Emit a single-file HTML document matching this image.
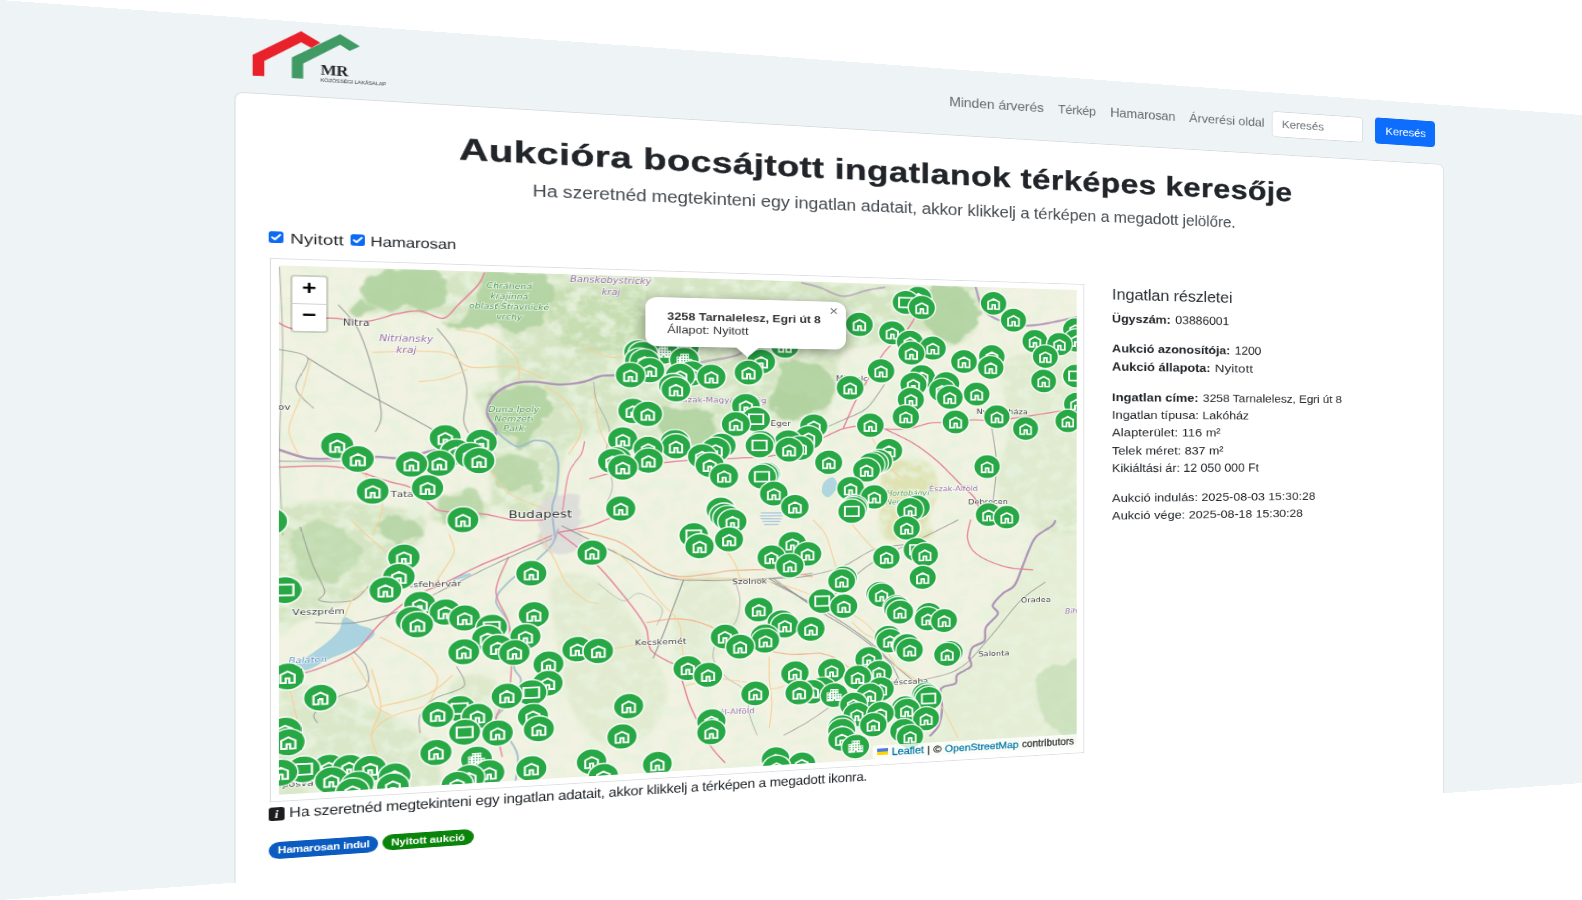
<!DOCTYPE html>
<html lang="hu"><head><meta charset="utf-8"><title>Aukcióra bocsájtott ingatlanok térképes keresője</title>
<style>
html,body{margin:0;padding:0;background:#fff;width:1582px;height:900px;overflow:hidden}
body{font-family:"Liberation Sans",sans-serif;font-kerning:none}
#w{position:absolute;left:0;top:0;width:1714px;height:964px;background:#eef3f6;overflow:hidden;transform-origin:0 0;transform:matrix3d(1.24354558,0.0903968027,0,0.000202628582,0,0.933609959,0,-1.77039391e-19,0,0,1,0,0,0,0,1)}
.t{position:absolute;white-space:nowrap;font-kerning:none;margin:0;padding:0;display:block;text-decoration:none}
#card{position:absolute;left:197.4px;top:84.4px;width:1319.7px;height:1000px;background:#fff;border-radius:7px;box-shadow:0 0 0 1px rgba(0,0,0,.09)}
#thumb{position:absolute;left:226.5px;top:267px;width:832.4px;height:609.5px;background:#fff;box-shadow:inset 0 0 0 1px #dcdfe3}
#map{position:absolute;left:234.8px;top:275.0px;width:815.6px;height:593.5px;overflow:hidden;background:#edf0d8}
.cb{position:absolute;width:13px;height:13px;border-radius:2.5px;background:#0b6bf2}
#inp{position:absolute;left:1290.3px;top:24.5px;width:119.2px;height:35.5px;background:#fff;border-radius:5px;box-shadow:inset 0 0 0 1px #d3d9df}
#btn{position:absolute;left:1425px;top:24px;width:81px;height:36px;background:#0d6efd;border-radius:4.5px}
.badge{position:absolute;height:18.8px;border-radius:10px}
</style></head><body><div id="w">

<svg style="position:absolute;left:0;top:0" width="400" height="84" viewBox="0 0 400 84">
<polygon fill="#e8212b" points="211.9,64.0 211.9,40.8 254.7,10.4 271.8,22.0 263.7,28.4 254.7,22.9 222.1,46.7 222.1,63.7"/>
<polygon fill="#3f9a64" points="246.4,64.0 246.4,40.7 289.6,10.7 307.4,22.9 298.2,28.9 289.6,22.7 256.5,46.7 256.5,63.8"/>
</svg>
<div class="t" style="left:272.3px;top:45.3px;font:700 16px/1 'Liberation Serif',serif;color:#2a2a2e;letter-spacing:-0.424px;transform:scaleX(0.9530);transform-origin:0 0;">MR</div>
<div class="t" style="left:272.0px;top:61.5px;font:400 5.6px/1 'Liberation Sans',sans-serif;color:#3a3a40;letter-spacing:-0.108px;transform:scaleX(0.9157);transform-origin:0 0;">KÖZÖSSÉGI LAKÁSALAP</div>
<a class="t" href="#" style="left:902.7px;top:33.8px;font:400 16px/1 'Liberation Sans',sans-serif;color:#666b70;letter-spacing:-0.038px;transform:scaleX(0.9865);transform-origin:0 0;">Minden árverés</a>
<a class="t" href="#" style="left:1028.0px;top:33.8px;font:400 16px/1 'Liberation Sans',sans-serif;color:#666b70;letter-spacing:-0.249px;transform:scaleX(0.9268);transform-origin:0 0;">Térkép</a>
<a class="t" href="#" style="left:1090.3px;top:33.8px;font:400 16px/1 'Liberation Sans',sans-serif;color:#666b70;letter-spacing:-0.111px;transform:scaleX(0.9681);transform-origin:0 0;">Hamarosan</a>
<a class="t" href="#" style="left:1186.4px;top:33.8px;font:400 16px/1 'Liberation Sans',sans-serif;color:#666b70;letter-spacing:-0.043px;transform:scaleX(0.9827);transform-origin:0 0;">Árverési oldal</a>
<div id="inp"></div><div id="btn"></div>
<div class="t" style="left:1302.5px;top:34.4px;font:400 15.5px/1 'Liberation Sans',sans-serif;color:#666c72;letter-spacing:-0.100px;transform:scaleX(0.9687);transform-origin:0 0;">Keresés</div>
<div class="t" style="left:1438.5px;top:34.2px;font:400 15.5px/1 'Liberation Sans',sans-serif;color:#fff;letter-spacing:-0.100px;transform:scaleX(0.9687);transform-origin:0 0;">Keresés</div>
<div id="card"></div>
<h1 class="t" style="left:398.9px;top:117.3px;font:700 35.5px/1 'Liberation Sans',sans-serif;color:#212529;letter-spacing:0.452px;transform:scaleX(1.0790);transform-origin:0 0;-webkit-text-stroke:0.45px #212529;">Aukcióra bocsájtott ingatlanok térképes keresője</h1>
<p class="t" style="left:469.4px;top:168.5px;font:400 19.5px/1 'Liberation Sans',sans-serif;color:#454a4f;letter-spacing:-0.074px;transform:scaleX(0.9745);transform-origin:0 0;">Ha szeretnéd megtekinteni egy ingatlan adatait, akkor klikkelj a térképen a megadott jelölőre.</p>
<div class="cb" style="left:226.3px;top:237.4px"><svg width="13" height="13" viewBox="0 0 13 13" style="position:absolute;left:0;top:0"><path d="M3 6.7 L5.4 9 L10 3.8" fill="none" stroke="#fff" stroke-width="1.9" stroke-linecap="round" stroke-linejoin="round"/></svg></div>
<div class="cb" style="left:298.7px;top:237.4px"><svg width="13" height="13" viewBox="0 0 13 13" style="position:absolute;left:0;top:0"><path d="M3 6.7 L5.4 9 L10 3.8" fill="none" stroke="#fff" stroke-width="1.9" stroke-linecap="round" stroke-linejoin="round"/></svg></div>
<label class="t" style="left:245.3px;top:236.5px;font:400 16px/1 'Liberation Sans',sans-serif;color:#212529;letter-spacing:0.100px;transform:scaleX(1.0404);transform-origin:0 0;">Nyitott</label>
<label class="t" style="left:317.2px;top:236.5px;font:400 16px/1 'Liberation Sans',sans-serif;color:#212529;letter-spacing:-0.108px;transform:scaleX(0.9690);transform-origin:0 0;">Hamarosan</label>
<div id="thumb"></div>
<div id="map">
<svg width="815.6" height="593.5" viewBox="0 0 815.6 593.5" style="position:absolute;left:0;top:0" font-family="Liberation Sans,sans-serif">
<defs><filter id="nz" x="0" y="0" width="100%" height="100%"><feTurbulence type="fractalNoise" baseFrequency="0.06 0.07" numOctaves="3" seed="7" result="n"/><feColorMatrix in="n" type="matrix" values="0 0 0 0 0.80  0 0 0 0 0.885  0 0 0 0 0.72  0 3.2 0 0 -1.35"/></filter><filter id="bl2" x="-5%" y="-5%" width="110%" height="110%"><feGaussianBlur stdDeviation="0.6"/></filter><filter id="bl3" x="-5%" y="-5%" width="110%" height="110%"><feTurbulence type="fractalNoise" baseFrequency="0.045" numOctaves="3" seed="3" result="t"/><feDisplacementMap in="SourceGraphic" in2="t" scale="22" xChannelSelector="R" yChannelSelector="G"/><feGaussianBlur stdDeviation="0.8"/></filter><filter id="bl" x="-5%" y="-5%" width="110%" height="110%"><feGaussianBlur stdDeviation="2.2"/></filter>
<g id="mc"><circle r="15.6" fill="#000" fill-opacity=".10"/><circle r="15.25" fill="#28a745" stroke="#ffffff" stroke-opacity=".9" stroke-width="1.6"/></g>
<g id="mh"><use href="#mc"/><path d="M-6.25,7.3 V-2 L0,-5.6 L6.25,-2 V7.3 H1.6 V1.9 H-1.6 V7.3 Z" fill="none" stroke="#fff" stroke-width="2" stroke-linejoin="miter"/></g>
<g id="mr"><use href="#mc"/><rect x="-7.5" y="-6" width="15" height="12" fill="none" stroke="#fff" stroke-width="2"/></g>
<g id="mb"><use href="#mc"/><path d="M-8,7.5 V-3.8 H-4.2 V-7.5 H4.6 V-1.2 H8 V7.5 Z" fill="#fff"/><g fill="#28a745"><rect x="-3.30" y="-6.10" width="1.4" height="1.4"/><rect x="-0.45" y="-6.10" width="1.4" height="1.4"/><rect x="2.40" y="-6.10" width="1.4" height="1.4"/><rect x="-6.90" y="-2.60" width="1.4" height="1.4"/><rect x="-6.90" y="0.30" width="1.4" height="1.4"/><rect x="-6.90" y="3.20" width="1.4" height="1.4"/><rect x="-3.30" y="-2.60" width="1.4" height="1.4"/><rect x="-3.30" y="0.30" width="1.4" height="1.4"/><rect x="-3.30" y="3.20" width="1.4" height="1.4"/><rect x="-0.45" y="-2.60" width="1.4" height="1.4"/><rect x="-0.45" y="0.30" width="1.4" height="1.4"/><rect x="2.40" y="-2.60" width="1.4" height="1.4"/><rect x="2.40" y="0.30" width="1.4" height="1.4"/><rect x="2.40" y="3.20" width="1.4" height="1.4"/><rect x="5.40" y="0.30" width="1.4" height="1.4"/><rect x="5.40" y="3.20" width="1.4" height="1.4"/><rect x="-0.45" y="5" width="1.4" height="2.5"/></g></g>
</defs>
<rect width="100%" height="100%" fill="#f1f2e1"/>
<g filter="url(#bl)">
<path d="M149.1,0.9 C199.8,0.8 350.5,-12.4 390.7,2.4 C431.0,17.2 398.2,74.8 390.7,89.5 C383.3,104.2 356.9,89.6 346.0,90.4 C335.1,91.2 330.3,89.0 325.4,94.3 C320.4,99.7 323.4,117.2 316.6,122.6 C309.8,127.9 296.6,126.4 284.5,126.5 C272.5,126.7 254.3,122.9 244.3,123.6 C234.3,124.3 231.1,129.6 224.4,130.8 C217.8,132.1 208.9,137.3 204.7,131.1 C200.5,124.8 199.1,103.7 199.1,93.4 C199.1,83.1 206.6,74.3 204.7,69.2 C202.8,64.1 196.3,63.2 187.9,62.8 C179.6,62.4 161.8,69.2 154.6,67.1 C147.5,65.0 157.7,52.8 145.0,50.3 C132.3,47.9 92.3,52.4 78.5,52.2 C64.8,52.1 62.5,53.8 62.5,49.4 C62.5,44.9 74.5,33.1 78.5,25.4 C82.5,17.7 74.8,7.4 86.6,3.3 C98.3,-0.8 98.4,1.1 149.1,0.9Z" fill="#d5e5c3" fill-opacity="1"/>
<path d="M363.2,1.6 C394.5,-31.4 512.2,1.4 551.0,1.4 C589.8,1.3 581.4,1.0 595.9,1.3 C610.4,1.5 621.2,2.9 638.2,2.8 C655.2,2.7 687.4,-4.6 697.9,0.7 C708.4,6.0 702.4,23.7 701.3,34.4 C700.1,45.0 697.9,57.6 691.2,64.6 C684.6,71.7 670.1,77.6 661.3,76.5 C652.5,75.5 649.1,58.8 638.2,58.5 C627.3,58.1 610.4,69.6 595.9,74.3 C581.4,78.9 559.5,77.5 551.0,86.2 C542.4,94.9 547.8,113.7 544.6,126.5 C541.5,139.4 538.3,155.2 532.0,163.2 C525.6,171.1 515.6,173.0 506.8,174.2 C497.9,175.5 490.1,168.9 478.7,170.8 C467.4,172.6 452.4,180.5 438.7,185.3 C424.9,190.2 408.7,197.3 396.1,199.7 C383.6,202.1 368.7,232.7 363.2,199.7 C357.7,166.7 331.9,34.7 363.2,1.6Z" fill="#d5e5c3" fill-opacity="1"/>
<path d="M187.9,131.3 C209.3,124.1 293.6,118.2 316.6,122.6 C339.5,127.0 327.8,147.0 325.4,157.6 C322.9,168.1 310.7,178.7 302.0,185.8 C293.2,192.8 279.7,192.8 273.0,199.8 C266.2,206.7 264.8,214.8 261.5,227.5 C258.1,240.3 259.5,266.9 252.9,276.0 C246.3,285.2 232.5,283.8 221.6,282.5 C210.8,281.2 196.3,273.0 187.9,268.3 C179.5,263.6 177.7,255.1 171.2,254.5 C164.7,253.8 154.6,258.8 149.1,264.4 C143.6,270.0 131.7,284.0 138.1,288.1 C144.6,292.1 178.7,296.7 187.9,288.9 C197.1,281.0 193.5,254.7 193.5,241.0 C193.5,227.3 187.9,215.8 187.9,206.7 C187.9,197.5 193.5,192.9 193.5,186.1 C193.5,179.2 188.8,174.7 187.9,165.6 C187.0,156.4 166.5,138.5 187.9,131.3Z" fill="#d5e5c3" fill-opacity="1"/>
<path d="M284.5,130.0 C297.2,121.7 360.4,112.4 378.1,121.7 C395.8,130.9 393.6,168.9 390.7,185.5 C387.8,202.0 373.2,218.6 360.8,220.9 C348.5,223.3 326.4,207.9 316.6,199.7 C306.7,191.5 307.3,183.4 302.0,171.8 C296.6,160.1 271.8,138.4 284.5,130.0Z" fill="#d5e5c3" fill-opacity="0.8"/>
<path d="M-0.6,275.3 C19.5,254.0 98.6,271.3 120.1,277.0 C141.7,282.6 130.2,300.4 128.8,309.3 C127.3,318.2 117.7,321.6 111.5,330.3 C105.3,339.1 101.0,353.2 91.5,361.8 C82.1,370.4 67.4,375.2 54.8,381.9 C42.2,388.5 25.1,397.8 15.9,401.5 C6.6,405.3 2.1,425.4 -0.6,404.4 C-3.4,383.3 -20.8,296.5 -0.6,275.3Z" fill="#d5e5c3" fill-opacity="1"/>
<path d="M-0.6,481.2 C4.9,460.5 18.6,472.8 32.5,475.9 C46.4,479.0 66.0,489.4 83.0,499.8 C100.0,510.3 124.0,526.0 134.5,538.6 C145.0,551.1 146.1,563.2 146.1,575.2 C146.1,587.1 159.0,606.1 134.5,610.2 C110.1,614.3 21.9,621.3 -0.6,599.8 C-23.2,578.3 -6.2,501.8 -0.6,481.2Z" fill="#d5e5c3" fill-opacity="0.8"/>
<path d="M157.7,475.3 C163.6,467.2 185.1,464.6 193.0,469.9 C200.8,475.1 205.8,494.7 204.8,506.7 C203.8,518.7 194.9,539.9 187.1,541.9 C179.2,543.8 162.6,529.6 157.7,518.5 C152.9,507.4 151.9,483.4 157.7,475.3Z" fill="#d5e5c3" fill-opacity="0.7"/>
<path d="M252.7,363.0 C257.8,348.5 278.0,352.7 289.2,356.7 C300.4,360.8 309.6,372.0 319.9,387.2 C330.3,402.4 343.3,429.0 351.1,447.9 C358.9,466.9 367.8,483.6 366.8,500.9 C365.7,518.3 355.7,542.6 344.8,551.9 C333.9,561.1 313.8,563.4 301.4,556.5 C289.1,549.6 278.0,529.2 270.9,510.5 C263.8,491.7 261.8,468.4 258.7,443.8 C255.7,419.2 247.6,377.5 252.7,363.0Z" fill="#d5e5c3" fill-opacity="0.55"/>
<path d="M378.1,366.7 C384.5,349.4 405.7,353.7 416.3,360.3 C427.0,366.9 440.5,391.3 442.1,406.5 C443.7,421.6 436.6,441.6 426.0,451.2 C415.3,460.8 386.1,478.2 378.1,464.1 C370.2,450.0 371.8,384.0 378.1,366.7Z" fill="#d5e5c3" fill-opacity="0.5"/>
<path d="M716.9,400.6 C720.5,393.4 731.2,397.1 738.3,385.3 C745.5,373.6 753.3,344.5 759.9,330.0 C766.5,315.4 767.7,303.4 778.0,298.2 C788.4,293.0 814.6,247.6 821.9,298.9 C829.3,350.3 851.8,557.1 821.9,606.3 C792.1,655.6 670.6,605.3 643.1,594.3 C615.6,583.3 655.3,554.5 657.0,540.2 C658.7,525.9 651.2,514.9 653.5,508.5 C655.9,502.1 666.9,505.9 671.0,501.5 C675.1,497.2 673.9,486.6 678.0,482.2 C682.1,477.8 692.1,479.5 695.6,475.1 C699.1,470.6 695.6,463.2 699.2,455.4 C702.7,447.7 713.9,437.5 716.9,428.4 C719.9,419.2 713.3,407.7 716.9,400.6Z" fill="#d5e5c3" fill-opacity="0.4"/>
<path d="M728.2,101.5 C732.7,84.4 747.5,85.4 762.2,81.9 C777.0,78.5 805.3,44.6 816.8,80.8 C828.3,117.0 843.4,263.0 831.5,299.2 C819.5,335.4 763.5,306.9 745.2,297.8 C726.8,288.7 723.1,263.6 721.4,244.7 C719.7,225.8 733.8,208.3 735.0,184.4 C736.1,160.5 723.7,118.6 728.2,101.5Z" fill="#d5e5c3" fill-opacity="0.6"/>
<path d="M252.9,23.0 C264.5,11.6 315.2,13.3 331.2,13.3 C347.2,13.4 346.5,12.2 348.9,23.3 C351.4,34.4 353.8,68.5 346.0,79.8 C338.2,91.2 316.0,91.0 302.0,91.3 C287.9,91.6 269.7,93.1 261.5,81.7 C253.3,70.3 241.3,34.4 252.9,23.0Z" fill="#c3dbae" fill-opacity="0.8"/>
<path d="M595.9,229.1 C601.3,221.1 616.4,218.0 625.1,218.1 C633.8,218.1 643.2,222.5 648.1,229.3 C653.0,236.1 655.2,248.0 654.7,259.1 C654.1,270.3 645.9,286.3 644.8,296.2 C643.7,306.1 656.3,315.0 648.1,318.6 C639.9,322.1 605.1,326.3 595.9,317.5 C586.7,308.8 592.7,280.6 592.7,265.9 C592.7,251.1 590.5,237.0 595.9,229.1Z" fill="#dfe3b4" fill-opacity="1"/>
</g>
<rect width="100%" height="100%" filter="url(#nz)" opacity=".85"/>
<g filter="url(#bl3)">
<path d="M770.8,498.6 C774.4,488.8 787.7,488.7 796.3,487.8 C804.8,486.9 817.7,477.4 821.9,493.1 C826.2,508.8 826.8,568.2 821.9,582.1 C817.1,595.9 800.5,582.0 792.6,576.2 C784.7,570.3 778.0,559.9 774.4,547.0 C770.8,534.0 767.1,508.5 770.8,498.6Z" fill="#b1d3a1" fill-opacity="0.45"/>
<path d="M86.6,5.0 C96.5,0.7 127.7,-2.2 138.1,-0.4 C148.5,1.5 147.3,8.9 149.1,16.2 C150.9,23.5 151.8,37.7 149.1,43.4 C146.4,49.2 138.6,51.1 132.6,50.7 C126.7,50.3 119.0,41.5 113.6,41.1 C108.1,40.7 104.5,48.1 100.0,48.3 C95.5,48.4 90.2,45.7 86.6,41.9 C83.0,38.1 78.5,31.6 78.5,25.4 C78.5,19.2 76.6,9.3 86.6,5.0Z" fill="#b1d3a1" fill-opacity="0.90"/>
<path d="M63.8,46.0 C66.5,43.9 77.4,40.2 81.2,40.4 C85.0,40.6 87.0,45.0 86.6,47.0 C86.1,48.9 82.1,51.3 78.5,52.2 C74.9,53.2 67.6,53.7 65.2,52.6 C62.7,51.6 61.2,48.0 63.8,46.0Z" fill="#b1d3a1" fill-opacity="0.90"/>
<path d="M151.9,60.3 C154.2,57.4 165.2,57.7 171.2,49.6 C177.2,41.4 184.2,19.5 187.9,11.4 C191.6,3.3 184.1,2.7 193.5,0.9 C202.9,-0.8 234.4,-2.3 244.3,0.8 C254.2,3.9 252.9,11.7 252.9,19.5 C252.9,27.3 248.1,39.3 244.3,47.5 C240.5,55.7 235.8,65.6 230.1,68.6 C224.4,71.6 215.5,67.8 210.3,65.7 C205.2,63.5 202.8,56.1 199.1,55.6 C195.4,55.2 192.6,61.0 187.9,62.8 C183.3,64.6 176.3,66.0 171.2,66.7 C166.1,67.4 160.6,68.1 157.4,67.0 C154.1,66.0 149.6,63.2 151.9,60.3Z" fill="#b1d3a1" fill-opacity="0.90"/>
<path d="M199.1,141.5 C202.8,138.0 209.4,132.2 216.0,130.9 C222.6,129.7 233.0,130.7 238.6,134.1 C244.3,137.5 249.1,144.4 250.0,151.3 C251.0,158.2 247.2,169.8 244.3,175.6 C241.5,181.3 235.8,181.4 233.0,186.0 C230.1,190.6 230.1,200.9 227.3,203.2 C224.5,205.5 219.7,202.7 216.0,199.8 C212.2,196.9 208.5,190.6 204.7,186.1 C201.0,181.5 195.4,178.1 193.5,172.4 C191.6,166.7 192.6,157.0 193.5,151.8 C194.4,146.7 195.4,144.9 199.1,141.5Z" fill="#b1d3a1" fill-opacity="0.90"/>
<path d="M193.5,217.0 C197.2,213.0 208.9,209.5 216.0,210.1 C223.0,210.7 231.1,215.3 235.8,220.5 C240.5,225.7 245.3,235.6 244.3,241.3 C243.4,247.1 236.7,253.4 230.1,255.0 C223.5,256.7 210.8,254.8 204.7,251.3 C198.6,247.9 195.4,239.8 193.5,234.1 C191.6,228.4 189.8,220.9 193.5,217.0Z" fill="#b1d3a1" fill-opacity="0.72"/>
<path d="M149.1,264.4 C152.8,258.8 164.7,253.8 171.2,254.5 C177.7,255.1 185.6,262.6 187.9,268.3 C190.2,274.0 191.6,285.5 185.1,288.8 C178.7,292.1 155.1,292.3 149.1,288.2 C143.1,284.2 145.4,270.1 149.1,264.4Z" fill="#b1d3a1" fill-opacity="0.72"/>
<path d="M478.7,113.0 C482.9,106.3 492.7,103.1 500.5,101.8 C508.3,100.4 518.8,101.4 525.6,105.0 C532.5,108.5 540.4,114.4 541.5,122.9 C542.5,131.4 537.2,147.9 532.0,155.9 C526.7,163.8 517.2,169.3 509.9,170.6 C502.6,171.8 493.7,168.3 488.0,163.5 C482.3,158.7 477.2,150.3 475.6,141.9 C474.1,133.5 474.6,119.7 478.7,113.0Z" fill="#b1d3a1" fill-opacity="0.90"/>
<path d="M644.8,6.3 C652.0,1.7 672.4,-2.2 681.2,1.3 C690.1,4.7 696.2,17.7 697.9,27.0 C699.6,36.3 697.3,49.5 691.2,57.1 C685.1,64.8 669.0,73.2 661.3,72.8 C653.6,72.4 648.7,61.9 644.8,54.6 C641.0,47.2 638.2,36.8 638.2,28.8 C638.2,20.7 637.6,10.8 644.8,6.3Z" fill="#b1d3a1" fill-opacity="0.90"/>
<path d="M363.1,162.5 C366.8,158.1 376.5,158.4 383.6,158.3 C390.8,158.3 400.6,158.5 406.1,162.2 C411.5,165.9 416.2,174.5 416.5,180.6 C416.8,186.7 412.4,195.2 407.8,199.0 C403.2,202.8 395.1,202.7 388.8,203.1 C382.5,203.4 374.5,204.1 369.9,201.1 C365.3,198.0 362.5,191.3 361.4,184.8 C360.2,178.4 359.4,167.0 363.1,162.5Z" fill="#b1d3a1" fill-opacity="0.90"/>
<path d="M476.2,139.0 C482.9,136.5 510.8,135.1 517.7,138.5 C524.7,141.9 521.7,155.5 517.7,159.3 C513.8,163.2 500.7,162.6 494.0,161.6 C487.4,160.6 481.0,157.2 478.0,153.4 C475.0,149.7 469.6,141.5 476.2,139.0Z" fill="#b1d3a1" fill-opacity="0.90"/>
<path d="M91.5,287.2 C93.9,283.1 114.4,284.6 120.1,287.7 C125.8,290.7 128.3,301.5 125.9,305.6 C123.5,309.8 111.5,315.4 105.8,312.4 C100.1,309.3 89.1,291.3 91.5,287.2Z" fill="#b1d3a1" fill-opacity="0.81"/>
<path d="M15.9,300.0 C22.4,290.8 45.5,288.8 54.8,293.7 C64.1,298.6 72.6,318.8 71.7,329.4 C70.8,339.9 58.5,353.7 49.2,357.0 C39.9,360.3 21.4,358.5 15.9,349.0 C10.3,339.5 9.4,309.2 15.9,300.0Z" fill="#b1d3a1" fill-opacity="0.54"/>
<path d="M244.3,269.0 C248.1,263.3 256.2,255.8 261.5,255.3 C266.7,254.8 272.0,260.1 275.9,265.9 C279.7,271.8 285.0,282.9 284.5,290.4 C284.1,298.0 278.7,307.7 273.0,311.1 C267.2,314.5 255.8,314.2 250.0,310.7 C244.3,307.1 239.6,296.6 238.6,289.7 C237.7,282.7 240.5,274.7 244.3,269.0Z" fill="#dcdbd9" fill-opacity="0.90"/>
<path d="M240.6,289.6 C247.2,285.4 269.9,286.4 277.0,290.2 C284.0,294.0 286.1,305.7 283.1,312.4 C280.0,319.0 266.3,329.7 258.7,330.2 C251.2,330.7 240.6,321.9 237.6,315.1 C234.6,308.3 234.1,293.8 240.6,289.6Z" fill="#dcdbd9" fill-opacity="0.90"/>
</g>
<g filter="url(#bl2)">
<path d="M58.3,397.1 C61.2,396.2 67.2,403.4 71.5,405.9 C75.9,408.5 82.5,410.0 84.4,412.6 C86.4,415.2 86.4,417.9 83.1,421.4 C79.8,425.0 71.6,430.1 64.9,434.0 C58.2,437.9 49.5,441.2 42.9,444.7 C36.3,448.1 30.6,453.7 25.4,454.9 C20.1,456.0 11.3,453.9 11.3,451.4 C11.3,449.0 20.1,444.4 25.4,440.0 C30.6,435.5 38.1,429.5 42.9,424.7 C47.6,420.0 51.3,416.0 53.9,411.3 C56.4,406.7 55.3,398.0 58.3,397.1Z" fill="#aad3df" fill-opacity="1"/>
<path d="M530.4,247.7 C532.3,244.6 537.5,240.8 539.9,241.6 C542.2,242.4 545.3,248.5 544.6,252.6 C543.9,256.7 538.5,264.7 535.8,266.0 C533.0,267.3 529.1,263.1 528.2,260.1 C527.3,257.0 528.4,250.8 530.4,247.7Z" fill="#aad3df" fill-opacity="0.9"/>
<path d="M159.0,354.8 C161.1,353.5 170.8,350.5 173.3,350.3 C175.8,350.0 176.2,352.0 174.1,353.2 C172.0,354.5 163.1,357.5 160.6,357.7 C158.1,358.0 156.9,356.0 159.0,354.8Z" fill="#aad3df" fill-opacity="1"/>
</g>
<path d="M-0.6,206.5 C3.7,208.2 16.7,214.8 25.5,216.5 C34.2,218.2 41.7,216.8 51.9,216.6 C62.0,216.3 76.7,215.0 86.6,215.0 C96.4,215.0 102.3,217.8 110.9,216.7 C119.5,215.6 129.9,210.6 138.1,208.3 C146.3,206.1 151.8,204.7 160.1,203.2 C168.4,201.8 181.4,202.7 187.9,199.8 C194.4,197.0 198.6,191.8 199.1,186.1 C199.6,180.4 191.2,172.4 190.7,165.5 C190.2,158.7 192.6,150.7 196.3,144.9 C200.0,139.2 207.0,133.9 213.2,131.0 C219.3,128.0 224.9,127.4 233.0,127.3 C241.0,127.1 252.9,130.4 261.5,130.3 C270.1,130.2 277.8,128.4 284.5,126.5 C291.3,124.7 295.2,120.6 302.0,119.3 C308.8,118.0 321.5,119.0 325.4,118.9" fill="none" stroke="#aa8cb6" stroke-width="2.6" stroke-opacity="0.9" stroke-linecap="round"/>
<path d="M324.8,118.9 C329.7,118.3 345.4,116.9 354.3,115.0 C363.2,113.1 369.1,110.0 378.1,107.5 C387.1,105.0 398.1,102.4 408.2,99.8 C418.3,97.3 430.5,95.9 438.7,92.1 C446.8,88.4 454.0,79.8 457.1,77.4" fill="none" stroke="#aa8cb6" stroke-width="2.6" stroke-opacity="0.6" stroke-linecap="round"/>
<path d="M506.8,1.8 C509.9,2.6 518.3,4.2 525.6,6.6 C533.0,9.1 542.5,16.4 551.0,16.7 C559.5,17.1 569.1,10.6 576.6,8.6 C584.1,6.5 592.7,4.9 595.9,4.2" fill="none" stroke="#aa8cb6" stroke-width="2.2" stroke-opacity="0.6" stroke-linecap="round"/>
<path d="M697.9,0.7 C700.1,6.3 701.7,26.2 711.3,34.1 C720.9,42.0 737.8,47.8 755.4,48.0 C773.0,48.1 806.6,37.1 816.8,34.9" fill="none" stroke="#aa8cb6" stroke-width="2.6" stroke-opacity="0.8" stroke-linecap="round"/>
<path d="M789.7,299.6 C789.1,300.7 789.4,302.9 785.8,306.1 C782.2,309.3 772.3,314.2 768.1,318.8 C763.8,323.5 762.8,327.8 760.2,333.9 C757.6,340.0 755.3,347.5 752.4,355.4 C749.4,363.3 746.5,375.1 742.6,381.2 C738.7,387.2 733.2,387.4 729.0,391.5 C724.8,395.7 718.4,402.0 717.4,406.3 C716.4,410.6 724.5,412.6 723.2,417.3 C721.9,421.9 712.3,428.4 709.7,434.0 C707.1,439.7 710.3,447.0 707.8,451.2 C705.2,455.3 697.2,455.6 694.3,459.2 C691.4,462.7 691.1,470.1 690.5,472.3" fill="none" stroke="#aa8cb6" stroke-width="2.6" stroke-opacity="0.9" stroke-linecap="round"/>
<path d="M690.5,472.3 C690.8,474.1 694.6,479.7 692.4,483.2 C690.2,486.6 680.0,489.7 677.1,493.1 C674.3,496.6 677.7,501.4 675.2,503.8 C672.7,506.1 664.8,505.7 661.9,507.3 C659.1,509.0 658.4,508.9 658.1,513.6 C657.8,518.2 660.3,527.9 660.0,535.0 C659.7,542.1 658.4,550.6 656.2,556.1 C654.0,561.7 648.4,566.3 646.8,568.3" fill="none" stroke="#aa8cb6" stroke-width="2.6" stroke-opacity="0.9" stroke-linecap="round"/>
<path d="M199.1,186.1 C202.4,188.9 212.7,201.5 218.8,203.2 C224.9,204.9 230.6,196.9 235.8,196.3 C241.0,195.8 246.2,195.7 250.0,199.8 C253.8,203.8 257.4,211.3 258.6,220.6 C259.8,229.8 258.1,246.0 257.2,255.3 C256.2,264.5 253.1,266.8 252.9,276.0 C252.7,285.3 255.3,305.0 255.8,310.8" fill="none" stroke="#9db8cc" stroke-width="2" stroke-opacity="0.9" stroke-linecap="round"/>
<path d="M258.7,300.9 C257.7,303.9 256.2,313.1 252.7,319.1 C249.2,325.1 244.6,329.9 237.6,337.0 C230.6,344.1 217.2,354.1 210.7,361.8 C204.3,369.5 198.9,375.3 198.9,383.2 C198.9,391.0 208.3,399.2 210.7,409.0 C213.2,418.8 212.7,432.7 213.7,441.8 C214.7,450.9 215.2,457.6 216.7,463.8 C218.2,469.9 224.1,471.4 222.7,478.6 C221.2,485.8 211.7,499.9 207.8,506.9 C203.8,513.9 198.4,514.8 198.9,520.9 C199.4,527.0 207.3,535.9 210.7,543.4 C214.2,550.9 218.7,556.0 219.7,565.8 C220.7,575.5 217.2,595.9 216.7,601.9" fill="none" stroke="#9db8cc" stroke-width="2" stroke-opacity="0.8" stroke-linecap="round"/>
<path d="M-0.6,64.4 C2.0,65.5 8.0,71.7 15.0,70.6 C22.0,69.6 30.7,60.0 41.3,58.3 C51.9,56.6 67.8,61.8 78.5,60.6 C89.2,59.5 97.3,53.7 105.4,51.5 C113.6,49.3 119.9,46.8 127.2,47.5 C134.5,48.1 143.2,56.6 149.1,55.3 C155.1,54.0 157.4,46.3 162.9,39.6 C168.4,32.9 178.2,21.5 182.3,15.0 C186.5,8.6 187.0,3.5 187.9,1.2" fill="none" stroke="#e6869c" stroke-width="1.5" stroke-opacity="1" stroke-linecap="round"/>
<path d="M-0.6,226.4 C8.1,226.4 35.1,223.7 51.9,226.6 C68.6,229.5 88.8,239.7 100.0,243.7 C111.2,247.7 112.7,246.0 119.0,250.6 C125.4,255.1 133.1,266.5 138.1,271.1 C143.1,275.7 140.8,276.2 149.1,278.0 C157.4,279.9 176.8,280.1 187.9,282.0 C199.1,283.9 206.6,288.0 216.0,289.3 C225.4,290.6 239.6,289.7 244.3,289.8" fill="none" stroke="#e6869c" stroke-width="1.5" stroke-opacity="1" stroke-linecap="round"/>
<path d="M289.8,241.6 C297.1,239.3 318.9,231.3 333.6,227.9 C348.3,224.4 360.6,222.7 378.1,221.0 C395.6,219.3 421.9,218.7 438.7,217.6 C455.4,216.4 465.8,217.1 478.7,214.1 C491.6,211.1 504.1,205.1 516.2,199.6 C528.2,194.2 540.9,185.0 551.0,181.3 C561.1,177.6 569.1,177.6 576.6,177.5 C584.1,177.5 588.3,180.6 595.9,181.2 C603.5,181.7 613.2,182.3 621.9,181.1 C630.6,179.8 639.3,174.8 648.1,173.5 C656.9,172.2 666.8,174.0 674.6,173.4 C682.3,172.7 685.6,170.2 694.6,169.5 C703.5,168.9 707.8,172.0 728.2,169.3 C748.6,166.7 802.0,156.2 816.8,153.5" fill="none" stroke="#e6869c" stroke-width="1.5" stroke-opacity="1" stroke-linecap="round"/>
<path d="M595.9,181.2 C601.3,184.2 618.6,192.8 628.4,199.6 C638.2,206.4 645.9,213.2 654.7,221.9 C663.5,230.6 674.0,243.7 681.2,251.9 C688.4,260.1 694.0,263.3 697.9,270.8 C701.8,278.3 703.5,292.8 704.6,297.2" fill="none" stroke="#e6869c" stroke-width="1.5" stroke-opacity="1" stroke-linecap="round"/>
<path d="M551.0,181.3 C553.1,175.8 559.5,158.1 563.8,148.3 C568.0,138.5 571.2,132.9 576.6,122.4 C581.9,112.0 588.3,96.5 595.9,85.3 C603.5,74.1 615.4,64.6 621.9,55.2 C628.4,45.8 632.8,33.2 635.0,28.9" fill="none" stroke="#e6869c" stroke-width="1.5" stroke-opacity="1" stroke-linecap="round"/>
<path d="M252.7,308.1 C246.7,311.0 228.6,319.8 216.7,325.6 C204.8,331.4 192.0,337.1 181.2,342.8 C170.4,348.6 162.1,354.3 151.9,360.0 C141.7,365.7 130.2,369.6 120.1,376.9 C110.1,384.3 100.1,394.7 91.5,404.4 C83.0,414.2 77.3,427.5 68.9,435.4 C60.4,443.3 48.3,448.0 40.9,451.7 C33.4,455.5 31.1,456.5 24.2,457.9 C17.3,459.4 3.5,459.8 -0.6,460.2" fill="none" stroke="#e6869c" stroke-width="1.5" stroke-opacity="1" stroke-linecap="round"/>
<path d="M210.7,332.7 C208.8,339.3 198.9,359.6 198.9,372.3 C198.9,385.0 208.3,395.6 210.7,409.0 C213.2,422.4 213.7,438.8 213.7,452.7 C213.7,466.6 213.2,481.2 210.7,492.5 C208.3,503.9 199.9,508.8 198.9,520.9 C197.9,532.9 203.8,557.5 204.8,564.8" fill="none" stroke="#e6869c" stroke-width="1.5" stroke-opacity="0.9" stroke-linecap="round"/>
<path d="M258.7,304.6 C263.8,309.6 279.0,322.7 289.2,334.6 C299.4,346.5 310.7,362.2 319.9,376.1 C329.2,390.0 339.6,405.9 344.8,417.9 C350.0,429.8 345.5,439.6 351.1,447.9 C356.6,456.2 373.6,464.5 378.1,467.8" fill="none" stroke="#e6869c" stroke-width="1.5" stroke-opacity="1" stroke-linecap="round"/>
<path d="M378.1,467.8 C379.2,472.3 382.3,486.2 384.5,494.4 C386.6,502.6 386.6,505.7 390.8,517.2 C395.0,528.8 404.1,551.9 409.9,563.5 C415.8,575.2 423.3,583.3 426.0,587.2" fill="none" stroke="#e6869c" stroke-width="1.5" stroke-opacity="1" stroke-linecap="round"/>
<path d="M692.1,296.8 C691.5,300.8 687.4,313.2 688.6,320.5 C689.7,327.8 692.1,334.4 699.2,340.5 C706.3,346.7 720.4,353.6 731.2,357.2 C741.9,360.8 758.1,361.3 763.5,362.1" fill="none" stroke="#e6869c" stroke-width="1.5" stroke-opacity="1" stroke-linecap="round"/>
<path d="M258.7,304.6 C263.8,303.4 279.0,301.3 289.2,297.8 C299.4,294.2 314.8,285.8 319.9,283.5" fill="none" stroke="#e6869c" stroke-width="1.5" stroke-opacity="1" stroke-linecap="round"/>
<path d="M25.5,103.6 C34.3,110.1 59.7,129.6 78.5,142.8 C97.3,156.0 124.5,172.8 138.1,182.9 C151.7,192.9 156.5,199.8 160.1,203.2" fill="none" stroke="#8f8f8f" stroke-width="1.2" stroke-opacity="0.8" stroke-linecap="round"/>
<path d="M53.2,43.0 C56.1,47.3 65.4,57.1 70.5,69.2 C75.6,81.4 80.3,99.7 83.9,115.9 C87.5,132.1 91.5,154.5 91.9,166.2 C92.4,178.0 87.5,183.1 86.6,186.4" fill="none" stroke="#8f8f8f" stroke-width="1.2" stroke-opacity="0.7" stroke-linecap="round"/>
<path d="M143.6,67.4 C146.4,71.8 155.5,82.9 160.1,94.2 C164.7,105.5 169.8,121.9 171.2,134.9 C172.6,148.0 168.0,163.4 168.4,172.5 C168.9,181.6 173.1,186.7 174.0,189.6" fill="none" stroke="#8f8f8f" stroke-width="1.2" stroke-opacity="0.7" stroke-linecap="round"/>
<path d="M-0.6,94.2 C3.7,95.7 22.9,96.5 25.5,103.6 C28.1,110.7 14.1,127.5 15.0,136.9 C15.9,146.3 28.1,156.2 30.7,160.0" fill="none" stroke="#8f8f8f" stroke-width="1.2" stroke-opacity="0.6" stroke-linecap="round"/>
<path d="M-0.6,219.7 C8.1,219.8 37.3,220.4 51.9,219.9 C66.4,219.4 80.8,217.2 86.6,216.7" fill="none" stroke="#8f8f8f" stroke-width="1.2" stroke-opacity="0.7" stroke-linecap="round"/>
<path d="M262.6,297.0 C268.1,300.5 284.6,310.7 295.7,317.6 C306.8,324.5 319.3,332.2 329.2,338.5 C339.0,344.7 345.5,351.0 354.6,355.3 C363.6,359.6 370.7,362.5 383.6,364.2 C396.6,365.9 416.7,365.5 432.2,365.6 C447.6,365.7 462.0,365.8 476.2,364.8 C490.5,363.9 510.8,360.6 517.7,359.8" fill="none" stroke="#8f8f8f" stroke-width="1.3" stroke-opacity="0.8" stroke-linecap="round"/>
<path d="M383.6,364.2 C381.9,369.6 376.8,385.7 373.3,396.4 C369.9,407.1 366.5,418.4 363.1,428.5 C359.7,438.5 354.6,452.1 352.9,456.8" fill="none" stroke="#8f8f8f" stroke-width="1.3" stroke-opacity="0.8" stroke-linecap="round"/>
<path d="M476.2,364.8 C479.2,367.4 487.1,374.1 494.0,379.9 C501.0,385.6 513.8,396.1 517.7,399.4" fill="none" stroke="#8f8f8f" stroke-width="1.3" stroke-opacity="0.7" stroke-linecap="round"/>
<path d="M474.6,369.6 C482.9,374.9 507.5,389.7 524.1,401.8 C540.8,413.9 560.4,429.5 574.5,442.3 C588.6,455.2 599.5,469.3 608.6,478.8 C617.7,488.4 625.8,496.0 629.2,499.4" fill="none" stroke="#8f8f8f" stroke-width="1.2" stroke-opacity="0.8" stroke-linecap="round"/>
<path d="M534.1,394.4 C542.0,386.9 563.1,362.5 581.3,349.4 C599.5,336.3 627.0,324.5 643.1,315.7 C659.2,306.9 672.2,299.8 678.0,296.6" fill="none" stroke="#8f8f8f" stroke-width="1.2" stroke-opacity="0.7" stroke-linecap="round"/>
<path d="M629.2,499.4 C637.4,497.2 664.0,494.7 678.0,486.1 C692.0,477.6 701.5,462.2 713.3,448.1 C725.2,434.0 738.3,413.2 749.1,401.6 C759.9,390.0 773.2,382.4 778.0,378.5" fill="none" stroke="#8f8f8f" stroke-width="1.2" stroke-opacity="0.7" stroke-linecap="round"/>
<path d="M478.7,214.1 C485.0,209.9 504.1,196.0 516.2,188.7 C528.2,181.4 540.9,175.9 551.0,170.3 C561.1,164.8 569.1,162.9 576.6,155.5 C584.1,148.1 592.7,130.8 595.9,125.9" fill="none" stroke="#8f8f8f" stroke-width="1.2" stroke-opacity="0.7" stroke-linecap="round"/>
<path d="M714.7,169.4 C715.8,178.2 720.9,205.2 721.4,222.1 C722.0,239.0 719.2,258.5 718.1,271.0 C716.9,283.6 715.3,292.9 714.7,297.3" fill="none" stroke="#8f8f8f" stroke-width="1.2" stroke-opacity="0.7" stroke-linecap="round"/>
<path d="M252.7,311.8 C243.7,316.4 216.6,329.9 198.9,339.7 C181.1,349.5 160.7,362.1 146.1,370.6 C131.6,379.2 124.4,385.4 111.5,390.9 C98.6,396.4 82.1,401.7 68.9,403.6 C55.7,405.4 38.6,402.4 32.5,402.2" fill="none" stroke="#8f8f8f" stroke-width="1.2" stroke-opacity="0.7" stroke-linecap="round"/>
<path d="M279.1,303.3 C286.0,305.8 308.2,310.5 320.7,318.1 C333.3,325.8 344.6,342.2 354.6,349.2 C364.5,356.2 370.2,358.8 380.2,360.1 C390.2,361.3 406.1,357.9 414.7,356.9 C423.4,356.0 421.9,354.8 432.2,354.3 C442.4,353.9 462.0,352.9 476.2,354.5 C490.5,356.1 510.8,362.4 517.7,364.0" fill="none" stroke="#f3b08c" stroke-width="1.5" stroke-opacity="0.9" stroke-linecap="round"/>
<path d="M83.9,95.8 C94.8,95.5 134.1,91.9 149.1,94.4 C164.1,97.0 162.8,108.4 174.0,111.0 C185.1,113.6 204.2,108.2 216.0,110.3 C227.7,112.4 239.6,121.4 244.3,123.6" fill="none" stroke="#f6cf97" stroke-width="1.3" stroke-opacity="0.9" stroke-linecap="round"/>
<path d="M127.2,128.7 C130.8,128.1 141.8,127.4 149.1,125.0 C156.4,122.6 167.5,116.2 171.2,114.5" fill="none" stroke="#f6cf97" stroke-width="1.3" stroke-opacity="0.9" stroke-linecap="round"/>
<path d="M83.0,457.3 C84.4,464.5 91.5,487.3 91.5,500.3 C91.5,513.3 82.1,522.2 83.0,535.3 C84.0,548.4 94.9,571.6 97.2,578.9" fill="none" stroke="#f6cf97" stroke-width="1.3" stroke-opacity="0.9" stroke-linecap="round"/>
<path d="M91.5,500.3 C98.7,498.3 123.5,493.8 134.5,488.4 C145.6,483.1 153.9,471.5 157.7,468.1" fill="none" stroke="#f6cf97" stroke-width="1.3" stroke-opacity="0.9" stroke-linecap="round"/>
<path d="M378.1,363.0 C390.4,363.3 430.2,361.9 451.8,365.1 C473.4,368.3 487.1,372.4 507.5,382.0 C528.0,391.7 557.7,406.8 574.5,422.9 C591.4,439.1 602.9,469.5 608.6,478.8" fill="none" stroke="#f6cf97" stroke-width="1.3" stroke-opacity="0.8" stroke-linecap="round"/>
<path d="M608.6,478.8 C615.5,485.1 638.5,500.5 650.0,516.2 C661.6,531.9 673.3,563.5 678.0,573.0" fill="none" stroke="#f6cf97" stroke-width="1.3" stroke-opacity="0.8" stroke-linecap="round"/>
<path d="M576.6,177.5 C579.8,184.9 589.4,210.6 595.9,221.7 C602.4,232.8 612.1,240.2 615.4,244.0" fill="none" stroke="#f6cf97" stroke-width="1.3" stroke-opacity="0.8" stroke-linecap="round"/>
<path d="M463.8,284.6 L485.1,284.9" fill="none" stroke="#8fb8dc" stroke-width="1.2" stroke-opacity="0.9" stroke-linecap="round"/>
<path d="M462.9,288.1 L486.0,288.4" fill="none" stroke="#8fb8dc" stroke-width="1.2" stroke-opacity="0.9" stroke-linecap="round"/>
<path d="M463.8,291.6 L485.1,292.0" fill="none" stroke="#8fb8dc" stroke-width="1.2" stroke-opacity="0.9" stroke-linecap="round"/>
<path d="M465.6,295.2 L483.3,295.4" fill="none" stroke="#8fb8dc" stroke-width="1.2" stroke-opacity="0.9" stroke-linecap="round"/>
<path d="M467.4,298.7 L481.6,298.9" fill="none" stroke="#8fb8dc" stroke-width="1.2" stroke-opacity="0.9" stroke-linecap="round"/>
<path d="M18.8,294.3 C20.7,301.2 26.1,323.8 29.7,335.9 C33.4,347.9 39.6,359.6 40.7,366.6 C41.8,373.5 32.3,375.5 36.3,377.5 C40.3,379.5 57.5,381.0 64.9,378.5 C72.3,375.9 77.8,365.0 80.4,362.3" fill="none" stroke="#8f8f8f" stroke-width="1.1" stroke-opacity="0.7" stroke-linecap="round"/>
<path d="M67.1,436.9 C69.0,439.8 76.4,447.5 78.2,454.1 C80.1,460.7 82.3,471.0 78.2,476.4 C74.1,481.7 61.6,481.5 53.9,486.2 C46.1,490.9 35.2,499.4 31.9,504.3 C28.6,509.2 33.7,513.6 34.1,515.5" fill="none" stroke="#8f8f8f" stroke-width="1.1" stroke-opacity="0.7" stroke-linecap="round"/>
<path d="M161.8,458.1 C162.9,461.9 172.1,475.1 168.7,481.1 C165.2,487.0 148.1,488.5 141.2,493.7 C134.4,499.0 129.9,506.2 127.6,512.7 C125.3,519.1 127.6,529.1 127.6,532.4" fill="none" stroke="#8f8f8f" stroke-width="1.1" stroke-opacity="0.7" stroke-linecap="round"/>
<path d="M64.9,286.8 C67.1,289.6 73.0,297.6 78.2,303.7 C83.4,309.8 93.1,320.3 96.1,323.6" fill="none" stroke="#f6cf97" stroke-width="1.2" stroke-opacity="0.9" stroke-linecap="round"/>
<path d="M58.3,397.7 C59.4,394.5 62.7,383.0 64.9,378.5 C67.1,373.9 67.8,373.5 71.5,370.3 C75.2,367.2 82.7,363.3 87.1,359.7 C91.6,356.1 96.4,350.6 98.3,348.8" fill="none" stroke="#f6cf97" stroke-width="1.2" stroke-opacity="0.9" stroke-linecap="round"/>
<path d="M154.9,305.2 C155.7,308.5 160.2,318.5 159.5,325.1 C158.7,331.6 153.4,338.6 150.3,344.6 C147.3,350.7 142.7,358.5 141.2,361.3" fill="none" stroke="#f6cf97" stroke-width="1.2" stroke-opacity="0.9" stroke-linecap="round"/>
<path d="M91.6,421.2 C95.3,423.7 107.3,431.2 114.0,436.2 C120.8,441.2 127.2,445.7 132.1,451.0 C137.0,456.4 142.0,462.8 143.5,468.5 C145.0,474.2 143.1,479.8 141.2,485.3 C139.3,490.8 137.4,497.8 132.1,501.7 C126.8,505.6 116.3,505.9 109.5,508.8 C102.8,511.7 96.1,515.0 91.6,519.0 C87.1,522.9 84.1,530.1 82.7,532.4" fill="none" stroke="#f6cf97" stroke-width="1.2" stroke-opacity="0.9" stroke-linecap="round"/>
<path d="M64.9,442.3 C67.5,448.0 76.7,467.0 80.4,476.5 C84.1,486.0 83.8,493.4 87.1,499.2 C90.5,504.9 98.3,509.1 100.5,511.1" fill="none" stroke="#f6cf97" stroke-width="1.2" stroke-opacity="0.9" stroke-linecap="round"/>
<path d="M10.2,478.3 L16.7,514.5" fill="none" stroke="#f6cf97" stroke-width="1.2" stroke-opacity="0.9" stroke-linecap="round"/>
<path d="M241.0,306.8 C243.3,311.7 250.8,326.2 255.2,335.9 C259.5,345.6 261.9,356.7 267.1,365.0 C272.3,373.4 281.1,381.9 286.2,385.9 C291.4,389.9 296.1,388.6 298.0,389.2" fill="none" stroke="#f6cf97" stroke-width="1.2" stroke-opacity="0.9" stroke-linecap="round"/>
<path d="M346.7,414.3 C350.8,413.7 363.9,411.0 371.4,410.8 C378.8,410.6 384.2,411.0 391.3,413.0 C398.4,415.0 408.0,419.6 413.8,422.8 C419.7,425.9 420.1,428.4 426.5,432.2 C432.8,435.9 443.3,441.3 451.9,445.1 C460.4,449.0 469.8,452.9 477.5,455.2 C485.2,457.6 490.4,458.6 498.2,459.2 C505.9,459.8 517.2,458.0 524.2,458.8 C531.2,459.6 534.7,461.1 540.0,464.1 C545.2,467.1 549.6,472.6 555.8,477.0 C562.0,481.3 569.0,487.2 577.0,490.2 C585.0,493.1 599.4,493.8 603.8,494.6" fill="none" stroke="#f3b08c" stroke-width="1.4" stroke-opacity="0.9" stroke-linecap="round"/>
<path d="M472.3,365.2 C476.6,368.3 489.5,377.2 498.2,384.0 C506.8,390.8 515.5,399.1 524.2,405.9 C532.9,412.8 541.7,418.2 550.5,425.1 C559.3,432.0 568.6,439.5 577.0,447.5 C585.5,455.5 595.3,465.1 601.1,473.0 C607.0,480.9 610.1,491.3 611.9,495.0" fill="none" stroke="#8f8f8f" stroke-width="1.2" stroke-opacity="0.8" stroke-linecap="round"/>
<path d="M472.3,365.2 C478.8,364.9 498.1,365.4 511.2,363.3 C524.2,361.1 538.2,357.5 550.5,352.2 C562.8,347.0 573.5,336.1 585.1,331.8 C596.6,327.5 614.2,327.3 620.0,326.4" fill="none" stroke="#8f8f8f" stroke-width="1.2" stroke-opacity="0.7" stroke-linecap="round"/>
<path d="M426.5,328.2 C428.1,331.2 434.1,340.3 436.6,346.3 C439.1,352.3 440.8,361.3 441.7,364.3" fill="none" stroke="#f6cf97" stroke-width="1.2" stroke-opacity="0.9" stroke-linecap="round"/>
<path d="M436.6,367.1 C437.4,371.1 441.7,382.7 441.7,391.1 C441.7,399.5 440.0,410.9 436.6,417.7 C433.2,424.5 425.2,425.2 421.4,432.0 C417.6,438.7 413.0,449.9 413.8,458.3 C414.7,466.8 421.0,475.4 426.5,482.6 C431.9,489.9 442.5,493.4 446.8,501.5 C451.0,509.7 449.7,522.6 451.9,531.6 C454.0,540.7 458.2,551.9 459.5,556.0" fill="none" stroke="#8f8f8f" stroke-width="1.0" stroke-opacity="0.6" stroke-linecap="round"/>
<path d="M561.1,300.8 C563.7,304.4 573.0,317.3 577.0,322.4 C581.0,327.6 583.7,330.2 585.1,331.8" fill="none" stroke="#f6cf97" stroke-width="1.2" stroke-opacity="0.9" stroke-linecap="round"/>
<path d="M519.0,294.1 C521.2,297.1 528.6,304.8 532.1,312.4 C535.6,320.1 538.0,332.7 540.0,339.9 C541.9,347.0 543.2,352.6 543.9,355.1" fill="none" stroke="#f6cf97" stroke-width="1.2" stroke-opacity="0.9" stroke-linecap="round"/>
<path d="M472.3,461.0 C472.3,465.5 471.9,478.4 472.3,487.9 C472.8,497.4 474.9,508.0 474.9,518.0 C474.9,528.0 472.8,542.8 472.3,547.8" fill="none" stroke="#f6cf97" stroke-width="1.2" stroke-opacity="0.9" stroke-linecap="round"/>
<path d="M444.2,489.5 C448.9,491.2 465.1,498.5 472.3,499.9 C479.6,501.3 485.2,498.1 487.8,497.7" fill="none" stroke="#f6cf97" stroke-width="1.2" stroke-opacity="0.9" stroke-linecap="round"/>
<path d="M561.1,422.5 C563.7,425.1 570.4,434.0 577.0,438.3 C583.7,442.7 591.8,447.6 601.1,448.5 C610.5,449.4 628.0,444.5 633.3,443.7" fill="none" stroke="#f6cf97" stroke-width="1.2" stroke-opacity="0.9" stroke-linecap="round"/>
<path d="M534.7,527.4 C530.8,530.2 519.0,539.1 511.2,544.2 C503.3,549.2 491.7,555.5 487.8,557.8" fill="none" stroke="#8f8f8f" stroke-width="1.1" stroke-opacity="0.7" stroke-linecap="round"/>
<path d="M312.5,325.7 C316.2,329.6 326.7,339.1 334.4,349.5 C342.2,360.0 351.6,377.3 359.0,388.3 C366.4,399.3 374.7,404.0 378.8,415.5 C383.0,426.9 380.9,446.0 383.8,456.9 C386.7,467.9 394.2,477.1 396.3,481.1" fill="none" stroke="#f6cf97" stroke-width="1.2" stroke-opacity="0.8" stroke-linecap="round"/>
<path d="M307.7,444.7 C312.1,444.0 327.1,441.2 334.4,440.1 C341.8,438.9 348.8,438.2 351.6,437.9" fill="none" stroke="#f6cf97" stroke-width="1.2" stroke-opacity="0.8" stroke-linecap="round"/>
<path d="M383.8,492.3 C389.2,491.1 406.7,485.6 416.4,485.1 C426.0,484.6 437.4,488.7 441.7,489.4" fill="none" stroke="#f6cf97" stroke-width="1.2" stroke-opacity="0.8" stroke-linecap="round"/>
<path d="M298.0,366.0 C302.0,369.5 315.4,384.9 322.2,387.1 C329.1,389.2 332.8,377.2 339.3,378.9 C345.9,380.6 358.6,390.8 361.5,397.2 C364.3,403.7 357.4,414.2 356.5,417.6" fill="none" stroke="#8f8f8f" stroke-width="1.0" stroke-opacity="0.5" stroke-linecap="round"/>
<path d="M162.0,68.1 C166.9,69.2 182.0,69.4 191.3,74.6 C200.7,79.8 213.1,91.0 218.0,99.4 C223.0,107.8 220.5,120.6 221.0,124.8" fill="none" stroke="#f6cf97" stroke-width="1.2" stroke-opacity="0.9" stroke-linecap="round"/>
<path d="M281.4,83.5 C286.5,85.8 301.8,96.6 312.1,97.6 C322.4,98.6 338.0,90.9 343.2,89.6" fill="none" stroke="#f6cf97" stroke-width="1.2" stroke-opacity="0.9" stroke-linecap="round"/>
<path d="M245.0,131.8 C248.5,134.8 260.1,141.4 266.2,149.9 C272.2,158.4 280.9,172.5 281.4,182.9 C281.9,193.3 271.3,207.4 269.2,212.3" fill="none" stroke="#f6cf97" stroke-width="1.2" stroke-opacity="0.9" stroke-linecap="round"/>
<path d="M293.6,138.6 C294.7,145.9 296.7,170.5 299.8,182.8 C302.9,195.1 310.1,207.4 312.1,212.4" fill="none" stroke="#f6cf97" stroke-width="1.2" stroke-opacity="0.9" stroke-linecap="round"/>
<path d="M293.6,127.5 C294.2,131.2 294.1,140.4 296.7,149.6 C299.3,158.8 307.5,172.3 309.0,182.8 C310.6,193.2 305.4,201.3 305.9,212.4 C306.5,223.5 312.1,239.5 312.1,249.4 C312.1,259.3 307.0,267.8 305.9,271.5" fill="none" stroke="#8f8f8f" stroke-width="1.0" stroke-opacity="0.6" stroke-linecap="round"/>
<path d="M263.1,278.3 C264.2,271.0 266.2,245.3 269.2,234.3 C272.3,223.3 278.9,218.4 281.4,212.3 C283.9,206.2 284.0,200.0 284.5,197.6" fill="none" stroke="#e6869c" stroke-width="1.3" stroke-opacity="0.9" stroke-linecap="round"/>
<path d="M0.5,2.3 C1.0,17.5 3.3,59.3 3.3,93.1 C3.3,126.8 0.5,169.9 0.5,204.8 C0.5,239.8 2.8,286.4 3.3,302.7" fill="none" stroke="#8f8f8f" stroke-width="1.0" stroke-opacity="0.6" stroke-linecap="round"/>
<path d="M28.1,106.6 C26.8,113.0 23.1,132.4 19.8,145.3 C16.6,158.2 9.3,172.8 8.8,183.9 C8.3,195.0 15.7,207.2 17.1,211.9" fill="none" stroke="#f6cf97" stroke-width="1.2" stroke-opacity="0.8" stroke-linecap="round"/>
<path d="M75.8,233.2 C78.6,239.2 91.4,257.0 92.8,268.9 C94.2,280.7 85.7,298.3 84.3,304.2" fill="none" stroke="#f6cf97" stroke-width="1.2" stroke-opacity="0.8" stroke-linecap="round"/>
<path d="M191.3,226.6 C194.3,231.5 202.2,248.5 209.1,255.8 C216.1,263.1 226.0,266.9 233.0,270.6 C240.0,274.3 248.0,276.9 251.0,278.2" fill="none" stroke="#f6cf97" stroke-width="1.2" stroke-opacity="0.8" stroke-linecap="round"/>
<text x="69.2" y="65.5" font-size="9.9" fill="#444" text-anchor="middle" stroke="#fff" stroke-opacity=".7" stroke-width="1.6" paint-order="stroke" font-family="DejaVu Sans,Liberation Sans,sans-serif">Nitra</text>
<text x="114.9" y="83.1" font-size="9.9" fill="#9470a6" text-anchor="middle" font-style="italic" stroke="#fff" stroke-opacity=".7" stroke-width="1.6" paint-order="stroke" font-family="DejaVu Sans,Liberation Sans,sans-serif">Nitriansky</text>
<text x="114.9" y="96.0" font-size="9.9" fill="#9470a6" text-anchor="middle" font-style="italic" stroke="#fff" stroke-opacity=".7" stroke-width="1.6" paint-order="stroke" font-family="DejaVu Sans,Liberation Sans,sans-serif">kraj</text>
<text x="211.7" y="18.6" font-size="9.0" fill="#4f9b56" text-anchor="middle" font-style="italic" stroke="#fff" stroke-opacity=".7" stroke-width="1.6" paint-order="stroke" font-family="DejaVu Sans,Liberation Sans,sans-serif">Chránená</text>
<text x="211.7" y="30.7" font-size="9.0" fill="#4f9b56" text-anchor="middle" font-style="italic" stroke="#fff" stroke-opacity=".7" stroke-width="1.6" paint-order="stroke" font-family="DejaVu Sans,Liberation Sans,sans-serif">krajinná</text>
<text x="211.7" y="42.7" font-size="9.0" fill="#4f9b56" text-anchor="middle" font-style="italic" stroke="#fff" stroke-opacity=".7" stroke-width="1.6" paint-order="stroke" font-family="DejaVu Sans,Liberation Sans,sans-serif">oblasť Štiavnické</text>
<text x="211.7" y="54.8" font-size="9.0" fill="#4f9b56" text-anchor="middle" font-style="italic" stroke="#fff" stroke-opacity=".7" stroke-width="1.6" paint-order="stroke" font-family="DejaVu Sans,Liberation Sans,sans-serif">vrchy</text>
<text x="310.7" y="9.2" font-size="9.9" fill="#9470a6" text-anchor="middle" font-style="italic" stroke="#fff" stroke-opacity=".7" stroke-width="1.6" paint-order="stroke" font-family="DejaVu Sans,Liberation Sans,sans-serif">Banskobystrický</text>
<text x="310.7" y="23.2" font-size="9.9" fill="#9470a6" text-anchor="middle" font-style="italic" stroke="#fff" stroke-opacity=".7" stroke-width="1.6" paint-order="stroke" font-family="DejaVu Sans,Liberation Sans,sans-serif">kraj</text>
<text x="216.0" y="163.1" font-size="9.0" fill="#4f9b56" text-anchor="middle" font-style="italic" stroke="#fff" stroke-opacity=".7" stroke-width="1.6" paint-order="stroke" font-family="DejaVu Sans,Liberation Sans,sans-serif">Duna-Ipoly</text>
<text x="216.0" y="173.8" font-size="9.0" fill="#4f9b56" text-anchor="middle" font-style="italic" stroke="#fff" stroke-opacity=".7" stroke-width="1.6" paint-order="stroke" font-family="DejaVu Sans,Liberation Sans,sans-serif">Nemzeti</text>
<text x="216.0" y="185.1" font-size="9.0" fill="#4f9b56" text-anchor="middle" font-style="italic" stroke="#fff" stroke-opacity=".7" stroke-width="1.6" paint-order="stroke" font-family="DejaVu Sans,Liberation Sans,sans-serif">Park</text>
<text x="110.9" y="261.3" font-size="9.45" fill="#444" text-anchor="middle" stroke="#fff" stroke-opacity=".7" stroke-width="1.6" paint-order="stroke" font-family="DejaVu Sans,Liberation Sans,sans-serif">Tata</text>
<text x="241.5" y="287.5" font-size="13.05" fill="#333" text-anchor="middle" stroke="#fff" stroke-opacity=".7" stroke-width="1.6" paint-order="stroke" font-family="DejaVu Sans,Liberation Sans,sans-serif">Budapest</text>
<text x="4.6" y="162.3" font-size="9.45" fill="#444" text-anchor="middle" stroke="#fff" stroke-opacity=".7" stroke-width="1.6" paint-order="stroke" font-family="DejaVu Sans,Liberation Sans,sans-serif">ov</text>
<text x="560.6" y="122.0" font-size="9.45" fill="#444" text-anchor="middle" stroke="#fff" stroke-opacity=".7" stroke-width="1.6" paint-order="stroke" font-family="DejaVu Sans,Liberation Sans,sans-serif">Miskolc</text>
<text x="484.3" y="178.5" font-size="9.45" fill="#444" text-anchor="middle" stroke="#fff" stroke-opacity=".7" stroke-width="1.6" paint-order="stroke" font-family="DejaVu Sans,Liberation Sans,sans-serif">Eger</text>
<text x="423.4" y="149.6" font-size="9.0" fill="#9470a6" text-anchor="middle" stroke="#fff" stroke-opacity=".7" stroke-width="1.6" paint-order="stroke" font-family="DejaVu Sans,Liberation Sans,sans-serif">Észak-Magyarország</text>
<text x="728.2" y="162.2" font-size="9.45" fill="#444" text-anchor="middle" stroke="#fff" stroke-opacity=".7" stroke-width="1.6" paint-order="stroke" font-family="DejaVu Sans,Liberation Sans,sans-serif">Nyíregyháza</text>
<text x="672.9" y="259.6" font-size="9.0" fill="#9470a6" text-anchor="middle" stroke="#fff" stroke-opacity=".7" stroke-width="1.6" paint-order="stroke" font-family="DejaVu Sans,Liberation Sans,sans-serif">Észak-Alföld</text>
<text x="712.0" y="276.6" font-size="9.45" fill="#444" text-anchor="middle" stroke="#fff" stroke-opacity=".7" stroke-width="1.6" paint-order="stroke" font-family="DejaVu Sans,Liberation Sans,sans-serif">Debrecen</text>
<text x="621.9" y="264.8" font-size="8.55" fill="#4f9b56" text-anchor="middle" font-style="italic" stroke="#fff" stroke-opacity=".7" stroke-width="1.6" paint-order="stroke" font-family="DejaVu Sans,Liberation Sans,sans-serif">Hortobágyi</text>
<text x="615.4" y="275.9" font-size="8.55" fill="#4f9b56" text-anchor="middle" font-style="italic" stroke="#fff" stroke-opacity=".7" stroke-width="1.6" paint-order="stroke" font-family="DejaVu Sans,Liberation Sans,sans-serif">Nemzeti</text>
<text x="129.8" y="364.9" font-size="9.45" fill="#444" text-anchor="middle" stroke="#fff" stroke-opacity=".7" stroke-width="1.6" paint-order="stroke" font-family="DejaVu Sans,Liberation Sans,sans-serif">Székesfehérvár</text>
<text x="35.3" y="393.0" font-size="9.45" fill="#444" text-anchor="middle" stroke="#fff" stroke-opacity=".7" stroke-width="1.6" paint-order="stroke" font-family="DejaVu Sans,Liberation Sans,sans-serif">Veszprém</text>
<text x="25.6" y="446.9" font-size="9.0" fill="#6a97c2" text-anchor="middle" font-style="italic" stroke="#fff" stroke-opacity=".7" stroke-width="1.6" paint-order="stroke" font-family="DejaVu Sans,Liberation Sans,sans-serif">Balaton</text>
<text x="12.6" y="586.0" font-size="9.45" fill="#444" text-anchor="middle" stroke="#fff" stroke-opacity=".7" stroke-width="1.6" paint-order="stroke" font-family="DejaVu Sans,Liberation Sans,sans-serif">Kaposvár</text>
<text x="360.5" y="440.9" font-size="9.45" fill="#444" text-anchor="middle" stroke="#fff" stroke-opacity=".7" stroke-width="1.6" paint-order="stroke" font-family="DejaVu Sans,Liberation Sans,sans-serif">Kecskemét</text>
<text x="451.8" y="370.8" font-size="9.45" fill="#444" text-anchor="middle" stroke="#fff" stroke-opacity=".7" stroke-width="1.6" paint-order="stroke" font-family="DejaVu Sans,Liberation Sans,sans-serif">Szolnok</text>
<text x="767.1" y="404.1" font-size="9.45" fill="#444" text-anchor="middle" stroke="#fff" stroke-opacity=".7" stroke-width="1.6" paint-order="stroke" font-family="DejaVu Sans,Liberation Sans,sans-serif">Oradea</text>
<text x="718.7" y="470.8" font-size="9.45" fill="#444" text-anchor="middle" stroke="#fff" stroke-opacity=".7" stroke-width="1.6" paint-order="stroke" font-family="DejaVu Sans,Liberation Sans,sans-serif">Salonta</text>
<text x="616.2" y="502.5" font-size="9.45" fill="#444" text-anchor="middle" stroke="#fff" stroke-opacity=".7" stroke-width="1.6" paint-order="stroke" font-family="DejaVu Sans,Liberation Sans,sans-serif">Békéscsaba</text>
<text x="435.0" y="529.0" font-size="9.0" fill="#9470a6" text-anchor="middle" stroke="#fff" stroke-opacity=".7" stroke-width="1.6" paint-order="stroke" font-family="DejaVu Sans,Liberation Sans,sans-serif">Dél-Alföld</text>
<text x="813.1" y="420.0" font-size="9.0" fill="#9470a6" text-anchor="middle" font-style="italic" stroke="#fff" stroke-opacity=".7" stroke-width="1.6" paint-order="stroke" font-family="DejaVu Sans,Liberation Sans,sans-serif">Bihor</text>
<use href="#mh" x="633.6" y="16.6"/>
<use href="#mh" x="718.4" y="20.4"/>
<use href="#mr" x="619.6" y="22.4"/>
<use href="#mh" x="637.4" y="28.2"/>
<use href="#mh" x="741.3" y="41.3"/>
<use href="#mh" x="568.7" y="51.3"/>
<use href="#mh" x="813.6" y="51.4"/>
<use href="#mh" x="604.7" y="60.9"/>
<use href="#mh" x="814.6" y="65.6"/>
<use href="#mh" x="766.1" y="67.8"/>
<use href="#mh" x="794.7" y="70.9"/>
<use href="#mh" x="624.3" y="72.1"/>
<use href="#mh" x="649.6" y="79.0"/>
<use href="#mh" x="488.7" y="79.9"/>
<use href="#mh" x="384.5" y="83.6"/>
<use href="#mh" x="625.8" y="85.9"/>
<use href="#mh" x="778.3" y="87.2"/>
<use href="#mh" x="716.4" y="88.4"/>
<use href="#mb" x="363.1" y="89.2"/>
<use href="#mh" x="338.4" y="90.7"/>
<use href="#mh" x="342.7" y="92.6"/>
<use href="#mh" x="684.7" y="95.4"/>
<use href="#mb" x="384.5" y="98.9"/>
<use href="#mh" x="463.8" y="99.5"/>
<use href="#mh" x="339.3" y="100.7"/>
<use href="#mh" x="344.4" y="101.7"/>
<use href="#mh" x="715.1" y="102.4"/>
<use href="#mh" x="592.3" y="108.7"/>
<use href="#mh" x="349.5" y="111.7"/>
<use href="#mr" x="813.6" y="111.7"/>
<use href="#mh" x="450.6" y="113.1"/>
<use href="#mh" x="392.2" y="115.0"/>
<use href="#mh" x="637.4" y="115.4"/>
<use href="#mh" x="330.0" y="118.0"/>
<use href="#mh" x="380.2" y="118.3"/>
<use href="#mh" x="776.3" y="118.8"/>
<use href="#mh" x="412.1" y="118.8"/>
<use href="#mh" x="664.8" y="123.6"/>
<use href="#mh" x="628.0" y="125.1"/>
<use href="#mh" x="558.6" y="130.3"/>
<use href="#mh" x="373.3" y="130.6"/>
<use href="#mh" x="660.0" y="132.2"/>
<use href="#mh" x="375.9" y="134.6"/>
<use href="#mh" x="699.1" y="136.5"/>
<use href="#mh" x="668.6" y="141.1"/>
<use href="#mh" x="625.2" y="144.1"/>
<use href="#mh" x="814.6" y="148.3"/>
<use href="#mh" x="447.9" y="153.7"/>
<use href="#mh" x="332.5" y="160.8"/>
<use href="#mh" x="347.4" y="164.3"/>
<use href="#mh" x="722.2" y="165.3"/>
<use href="#mh" x="619.6" y="166.0"/>
<use href="#mr" x="458.5" y="170.1"/>
<use href="#mh" x="804.6" y="170.3"/>
<use href="#mh" x="675.2" y="172.1"/>
<use href="#mh" x="437.4" y="176.0"/>
<use href="#mh" x="580.6" y="176.8"/>
<use href="#mh" x="519.5" y="178.1"/>
<use href="#mh" x="755.3" y="180.3"/>
<use href="#mh" x="513.8" y="192.7"/>
<use href="#mh" x="151.1" y="193.3"/>
<use href="#mh" x="322.4" y="195.0"/>
<use href="#mh" x="492.3" y="197.9"/>
<use href="#mh" x="375.0" y="198.0"/>
<use href="#mh" x="185.2" y="198.2"/>
<use href="#mr" x="463.8" y="199.0"/>
<use href="#mr" x="462.1" y="202.1"/>
<use href="#mh" x="422.6" y="202.1"/>
<use href="#mh" x="52.0" y="202.1"/>
<use href="#mh" x="375.9" y="203.1"/>
<use href="#mh" x="504.8" y="205.2"/>
<use href="#mh" x="347.8" y="206.1"/>
<use href="#mh" x="416.5" y="207.2"/>
<use href="#mh" x="493.2" y="207.2"/>
<use href="#mh" x="601.0" y="208.4"/>
<use href="#mh" x="161.4" y="209.9"/>
<use href="#mh" x="174.9" y="213.8"/>
<use href="#mh" x="402.6" y="215.3"/>
<use href="#mh" x="70.6" y="217.5"/>
<use href="#mh" x="316.6" y="218.8"/>
<use href="#mh" x="182.9" y="219.7"/>
<use href="#mh" x="348.1" y="220.3"/>
<use href="#mh" x="312.4" y="220.8"/>
<use href="#mh" x="589.8" y="222.1"/>
<use href="#mh" x="145.6" y="222.5"/>
<use href="#mh" x="535.5" y="222.9"/>
<use href="#mh" x="119.7" y="223.4"/>
<use href="#mh" x="585.2" y="224.2"/>
<use href="#mh" x="410.4" y="225.6"/>
<use href="#mh" x="581.5" y="226.3"/>
<use href="#mh" x="322.4" y="228.2"/>
<use href="#mh" x="711.0" y="229.0"/>
<use href="#mh" x="576.4" y="232.6"/>
<use href="#mr" x="469.1" y="237.2"/>
<use href="#mr" x="467.4" y="238.2"/>
<use href="#mh" x="425.2" y="239.0"/>
<use href="#mr" x="464.7" y="240.2"/>
<use href="#mh" x="134.6" y="250.7"/>
<use href="#mh" x="84.1" y="254.1"/>
<use href="#mh" x="559.1" y="255.6"/>
<use href="#mh" x="477.1" y="261.0"/>
<use href="#mh" x="584.9" y="266.3"/>
<use href="#mh" x="320.4" y="277.1"/>
<use href="#mh" x="499.4" y="277.4"/>
<use href="#mr" x="563.2" y="278.7"/>
<use href="#mh" x="631.7" y="279.6"/>
<use href="#mh" x="421.7" y="279.9"/>
<use href="#mr" x="562.3" y="280.8"/>
<use href="#mh" x="624.3" y="282.7"/>
<use href="#mr" x="560.4" y="283.9"/>
<use href="#mh" x="425.2" y="287.1"/>
<use href="#mh" x="-7.3" y="287.2"/>
<use href="#mh" x="167.7" y="288.1"/>
<use href="#mh" x="428.7" y="290.2"/>
<use href="#mh" x="712.6" y="290.4"/>
<use href="#mh" x="733.5" y="293.9"/>
<use href="#mh" x="433.9" y="294.4"/>
<use href="#mh" x="620.5" y="305.8"/>
<use href="#mr" x="394.0" y="310.5"/>
<use href="#mh" x="430.4" y="316.3"/>
<use href="#mh" x="496.7" y="322.9"/>
<use href="#mh" x="400.0" y="323.9"/>
<use href="#mh" x="292.0" y="329.1"/>
<use href="#mh" x="112.7" y="330.2"/>
<use href="#mr" x="631.7" y="333.2"/>
<use href="#mh" x="512.9" y="335.7"/>
<use href="#mh" x="474.5" y="339.0"/>
<use href="#mh" x="640.8" y="339.8"/>
<use href="#mh" x="598.2" y="341.9"/>
<use href="#mh" x="494.0" y="349.8"/>
<use href="#mh" x="232.8" y="351.9"/>
<use href="#mh" x="108.1" y="352.4"/>
<use href="#mr" x="5.3" y="364.6"/>
<use href="#mh" x="551.3" y="367.0"/>
<use href="#mh" x="95.7" y="367.4"/>
<use href="#mh" x="638.3" y="368.4"/>
<use href="#mh" x="549.5" y="370.1"/>
<use href="#mh" x="127.5" y="384.9"/>
<use href="#mh" x="590.8" y="387.1"/>
<use href="#mh" x="593.0" y="389.3"/>
<use href="#mh" x="151.1" y="394.5"/>
<use href="#mr" x="528.6" y="394.5"/>
<use href="#mh" x="235.2" y="400.5"/>
<use href="#mh" x="551.8" y="401.6"/>
<use href="#mh" x="169.3" y="402.0"/>
<use href="#mh" x="119.7" y="402.1"/>
<use href="#mh" x="461.2" y="402.6"/>
<use href="#mh" x="609.3" y="404.7"/>
<use href="#mh" x="610.3" y="406.8"/>
<use href="#mh" x="125.2" y="408.1"/>
<use href="#mh" x="613.1" y="411.1"/>
<use href="#mr" x="194.9" y="413.8"/>
<use href="#mh" x="644.9" y="415.5"/>
<use href="#mh" x="485.1" y="419.0"/>
<use href="#mh" x="644.0" y="420.8"/>
<use href="#mh" x="488.7" y="423.2"/>
<use href="#mh" x="662.3" y="423.6"/>
<use href="#mh" x="227.1" y="425.9"/>
<use href="#mh" x="190.8" y="426.4"/>
<use href="#mh" x="516.5" y="428.5"/>
<use href="#mh" x="426.0" y="434.1"/>
<use href="#mh" x="467.4" y="435.8"/>
<use href="#mh" x="200.5" y="437.6"/>
<use href="#mh" x="468.2" y="441.0"/>
<use href="#mh" x="168.5" y="441.1"/>
<use href="#mh" x="600.0" y="442.4"/>
<use href="#mh" x="277.4" y="442.9"/>
<use href="#mh" x="216.6" y="444.2"/>
<use href="#mh" x="298.2" y="445.9"/>
<use href="#mh" x="601.9" y="446.7"/>
<use href="#mh" x="441.8" y="447.1"/>
<use href="#mh" x="619.6" y="452.7"/>
<use href="#mh" x="620.5" y="453.8"/>
<use href="#mh" x="249.4" y="459.0"/>
<use href="#mh" x="623.9" y="459.3"/>
<use href="#mh" x="7.6" y="461.8"/>
<use href="#mh" x="668.6" y="464.5"/>
<use href="#mh" x="665.7" y="466.5"/>
<use href="#mh" x="578.8" y="468.3"/>
<use href="#mh" x="387.9" y="470.6"/>
<use href="#mh" x="408.7" y="479.8"/>
<use href="#mh" x="538.5" y="481.0"/>
<use href="#mh" x="248.6" y="481.8"/>
<use href="#mh" x="499.4" y="482.2"/>
<use href="#mh" x="589.8" y="485.6"/>
<use href="#mh" x="36.9" y="487.1"/>
<use href="#mh" x="566.8" y="490.8"/>
<use href="#mr" x="232.8" y="491.9"/>
<use href="#mh" x="209.3" y="494.6"/>
<use href="#mh" x="528.6" y="503.5"/>
<use href="#mh" x="457.6" y="504.9"/>
<use href="#mh" x="517.7" y="506.1"/>
<use href="#mh" x="503.9" y="506.4"/>
<use href="#mr" x="164.6" y="506.8"/>
<use href="#mh" x="591.7" y="506.8"/>
<use href="#mb" x="541.3" y="511.5"/>
<use href="#mh" x="144.0" y="512.4"/>
<use href="#mh" x="328.3" y="513.1"/>
<use href="#mh" x="579.7" y="513.6"/>
<use href="#mr" x="641.1" y="515.8"/>
<use href="#mh" x="181.3" y="516.6"/>
<use href="#mr" x="643.0" y="518.1"/>
<use href="#mh" x="234.4" y="519.7"/>
<use href="#mr" x="644.9" y="521.4"/>
<use href="#mh" x="5.3" y="522.4"/>
<use href="#mh" x="562.3" y="524.2"/>
<use href="#mh" x="618.6" y="531.6"/>
<use href="#mr" x="169.3" y="534.4"/>
<use href="#mh" x="240.1" y="534.9"/>
<use href="#mh" x="620.5" y="534.9"/>
<use href="#mh" x="8.3" y="535.8"/>
<use href="#mh" x="412.1" y="536.2"/>
<use href="#mh" x="565.9" y="537.0"/>
<use href="#mh" x="200.5" y="537.3"/>
<use href="#mh" x="591.7" y="537.4"/>
<use href="#mh" x="642.1" y="546.8"/>
<use href="#mh" x="321.6" y="548.9"/>
<use href="#mh" x="412.1" y="549.5"/>
<use href="#mh" x="583.8" y="550.7"/>
<use href="#mh" x="549.5" y="551.8"/>
<use href="#mh" x="549.5" y="555.9"/>
<use href="#mh" x="142.4" y="556.1"/>
<use href="#mh" x="616.8" y="560.1"/>
<use href="#mh" x="549.5" y="566.4"/>
<use href="#mb" x="180.5" y="566.5"/>
<use href="#mh" x="44.4" y="566.8"/>
<use href="#mr" x="21.8" y="567.1"/>
<use href="#mh" x="624.3" y="568.0"/>
<use href="#mh" x="62.7" y="568.1"/>
<use href="#mh" x="1.6" y="569.5"/>
<use href="#mh" x="81.8" y="570.4"/>
<use href="#mb" x="564.6" y="576.8"/>
<use href="#mh" x="291.5" y="577.0"/>
<use href="#mh" x="104.2" y="580.6"/>
<use href="#mh" x="232.8" y="580.9"/>
<use href="#mh" x="46.7" y="581.3"/>
<use href="#mh" x="192.4" y="583.0"/>
<use href="#mh" x="357.1" y="584.2"/>
<use href="#mh" x="478.9" y="586.8"/>
<use href="#mh" x="173.3" y="587.5"/>
<use href="#mh" x="70.3" y="587.8"/>
<use href="#mh" x="102.6" y="592.1"/>
<use href="#mh" x="162.2" y="594.5"/>
<use href="#mh" x="303.2" y="594.9"/>
<use href="#mh" x="506.6" y="594.9"/>
<use href="#mh" x="65.7" y="595.1"/>
<use href="#mh" x="479.8" y="597.2"/>
</svg>
<div style="position:absolute;left:10px;top:10px;width:30px;height:61px;background:#fff;border:2px solid rgba(0,0,0,.15);border-radius:4px;background-clip:padding-box">
<div style="position:absolute;left:0;top:30px;width:30px;height:1px;background:#ccc"></div></div>
<div class="t" style="left:12px;top:12px;width:30px;height:30px;text-align:center;font:700 22px/30px 'Liberation Mono',monospace;color:#000">+</div>
<div class="t" style="left:12px;top:43px;width:30px;height:30px;text-align:center;font:700 22px/28px 'Liberation Mono',monospace;color:#000">−</div>
<div style="position:absolute;left:345.3px;top:23.6px;width:209px;height:59.8px;background:#fff;border-radius:12px;box-shadow:0 3px 14px rgba(0,0,0,.4)"></div>
<div style="position:absolute;left:441.1px;top:74px;width:17px;height:17px;background:#fff;transform:rotate(45deg);box-shadow:0 3px 14px rgba(0,0,0,.4)"></div>
<div style="position:absolute;left:425px;top:60px;width:50px;height:23.4px;background:#fff"></div>
<div class="t" style="left:366.8px;top:39.6px;font:700 13px/1 'Liberation Sans',sans-serif;color:#333;letter-spacing:-0.015px;transform:scaleX(0.9927);transform-origin:0 0;">3258 Tarnalelesz, Egri út 8</div>
<div class="t" style="left:366.8px;top:56.4px;font:400 13px/1 'Liberation Sans',sans-serif;color:#333;letter-spacing:-0.005px;transform:scaleX(0.9972);transform-origin:0 0;">Állapot: Nyitott</div>
<div class="t" style="left:536.5px;top:28.0px;font:400 16px/1 'Liberation Sans',sans-serif;color:#757575;letter-spacing:0.000px;">×</div>
<div style="position:absolute;right:0;bottom:0;height:16.8px;width:232.5px;background:rgba(255,255,255,.8)"></div>
<svg style="position:absolute;left:588.5px;top:580.6px" width="12" height="8" viewBox="0 0 12 8"><rect width="12" height="4" fill="#4c7be1"/><rect y="4" width="12" height="4" fill="#ffd500"/></svg>
<div class="t" style="left:604.5px;top:579.5px;font:400 12px/1 'Liberation Sans',sans-serif;color:#0078a8;letter-spacing:-0.022px;transform:scaleX(0.9890);transform-origin:0 0;-webkit-text-stroke:0.3px #0078a8;">Leaflet</div>
<div class="t" style="left:643.5px;top:579.5px;font:400 12px/1 'Liberation Sans',sans-serif;color:#333;letter-spacing:0.147px;transform:scaleX(1.0586);transform-origin:0 0;-webkit-text-stroke:0.3px #333;">| ©</div>
<div class="t" style="left:663.5px;top:579.5px;font:400 12px/1 'Liberation Sans',sans-serif;color:#0078a8;letter-spacing:-0.015px;transform:scaleX(0.9937);transform-origin:0 0;-webkit-text-stroke:0.3px #0078a8;">OpenStreetMap</div>
<div class="t" style="left:751.0px;top:579.5px;font:400 12px/1 'Liberation Sans',sans-serif;color:#333;letter-spacing:-0.039px;transform:scaleX(0.9796);transform-origin:0 0;-webkit-text-stroke:0.3px #333;">contributors</div>
</div>
<h5 class="t" style="left:1091.9px;top:269.3px;font:400 20px/1 'Liberation Sans',sans-serif;color:#2b3035;letter-spacing:-0.047px;transform:scaleX(0.9841);transform-origin:0 0;">Ingatlan részletei</h5>
<div class="t" style="left:1091.9px;top:303.3px;font:700 15.5px/1 'Liberation Sans',sans-serif;color:#212529;letter-spacing:-0.069px;transform:scaleX(0.9803);transform-origin:0 0;">Ügyszám:</div><div class="t" style="left:1168.7px;top:303.3px;font:400 15.5px/1 'Liberation Sans',sans-serif;color:#212529;letter-spacing:-0.067px;transform:scaleX(0.9797);transform-origin:0 0;">03886001</div>
<div class="t" style="left:1091.9px;top:342.3px;font:700 15.5px/1 'Liberation Sans',sans-serif;color:#212529;letter-spacing:-0.013px;transform:scaleX(0.9954);transform-origin:0 0;">Aukció azonosítója:</div><div class="t" style="left:1242.9px;top:342.3px;font:400 15.5px/1 'Liberation Sans',sans-serif;color:#212529;letter-spacing:-0.074px;transform:scaleX(0.9808);transform-origin:0 0;">1200</div>
<div class="t" style="left:1091.9px;top:365.8px;font:700 15.5px/1 'Liberation Sans',sans-serif;color:#212529;letter-spacing:0.015px;transform:scaleX(1.0055);transform-origin:0 0;">Aukció állapota:</div><div class="t" style="left:1218.0px;top:365.8px;font:400 15.5px/1 'Liberation Sans',sans-serif;color:#212529;letter-spacing:0.168px;transform:scaleX(1.0704);transform-origin:0 0;">Nyitott</div>
<div class="t" style="left:1091.9px;top:406.0px;font:700 15.5px/1 'Liberation Sans',sans-serif;color:#212529;letter-spacing:0.030px;transform:scaleX(1.0114);transform-origin:0 0;">Ingatlan címe:</div><div class="t" style="left:1203.2px;top:406.0px;font:400 15.5px/1 'Liberation Sans',sans-serif;color:#212529;letter-spacing:-0.049px;transform:scaleX(0.9795);transform-origin:0 0;">3258 Tarnalelesz, Egri út 8</div>
<div class="t" style="left:1091.9px;top:428.7px;font:400 15.5px/1 'Liberation Sans',sans-serif;color:#212529;letter-spacing:0.002px;transform:scaleX(1.0009);transform-origin:0 0;">Ingatlan típusa: Lakóház</div>
<div class="t" style="left:1091.9px;top:452.0px;font:400 15.5px/1 'Liberation Sans',sans-serif;color:#212529;letter-spacing:0.046px;transform:scaleX(1.0191);transform-origin:0 0;">Alapterület: 116 m²</div>
<div class="t" style="left:1091.9px;top:475.6px;font:400 15.5px/1 'Liberation Sans',sans-serif;color:#212529;letter-spacing:-0.004px;transform:scaleX(0.9985);transform-origin:0 0;">Telek méret: 837 m²</div>
<div class="t" style="left:1091.9px;top:498.6px;font:400 15.5px/1 'Liberation Sans',sans-serif;color:#212529;letter-spacing:-0.018px;transform:scaleX(0.9922);transform-origin:0 0;">Kikiáltási ár: 12 050 000 Ft</div>
<div class="t" style="left:1091.9px;top:538.4px;font:400 15.5px/1 'Liberation Sans',sans-serif;color:#212529;letter-spacing:0.013px;transform:scaleX(1.0054);transform-origin:0 0;">Aukció indulás: 2025-08-03 15:30:28</div>
<div class="t" style="left:1091.9px;top:561.3px;font:400 15.5px/1 'Liberation Sans',sans-serif;color:#212529;letter-spacing:0.009px;transform:scaleX(1.0035);transform-origin:0 0;">Aukció vége: 2025-08-18 15:30:28</div>
<div style="position:absolute;left:226.2px;top:883.2px;width:14.1px;height:14.6px;background:#1d1d1f;border-radius:2.5px"></div>
<div class="t" style="left:231.3px;top:885.0px;font:700 12px/1 'Liberation Serif',serif;color:#fff;letter-spacing:0.000px;font-style:italic;">i</div>
<div class="t" style="left:244.2px;top:881.5px;font:400 16px/1 'Liberation Sans',sans-serif;color:#212529;letter-spacing:-0.237px;transform:scaleX(0.9039);transform-origin:0 0;">Ha szeretnéd megtekinteni egy ingatlan adatait, akkor klikkelj a térképen a megadott ikonra.</div>
<div class="badge" style="left:225.9px;top:922.1px;width:97.7px;background:#0b5cc0"></div>
<div class="badge" style="left:327.9px;top:921.6px;width:84.8px;background:#0a840a"></div>
<span class="t" style="left:233.5px;top:926.0px;font:700 11.5px/1 'Liberation Sans',sans-serif;color:#fff;letter-spacing:-0.202px;transform:scaleX(0.9119);transform-origin:0 0;">Hamarosan indul</span>
<div class="t" style="left:336.0px;top:925.5px;font:700 11.5px/1 'Liberation Sans',sans-serif;color:#fff;letter-spacing:-0.151px;transform:scaleX(0.9247);transform-origin:0 0;">Nyitott aukció</div>
</div></body></html>
